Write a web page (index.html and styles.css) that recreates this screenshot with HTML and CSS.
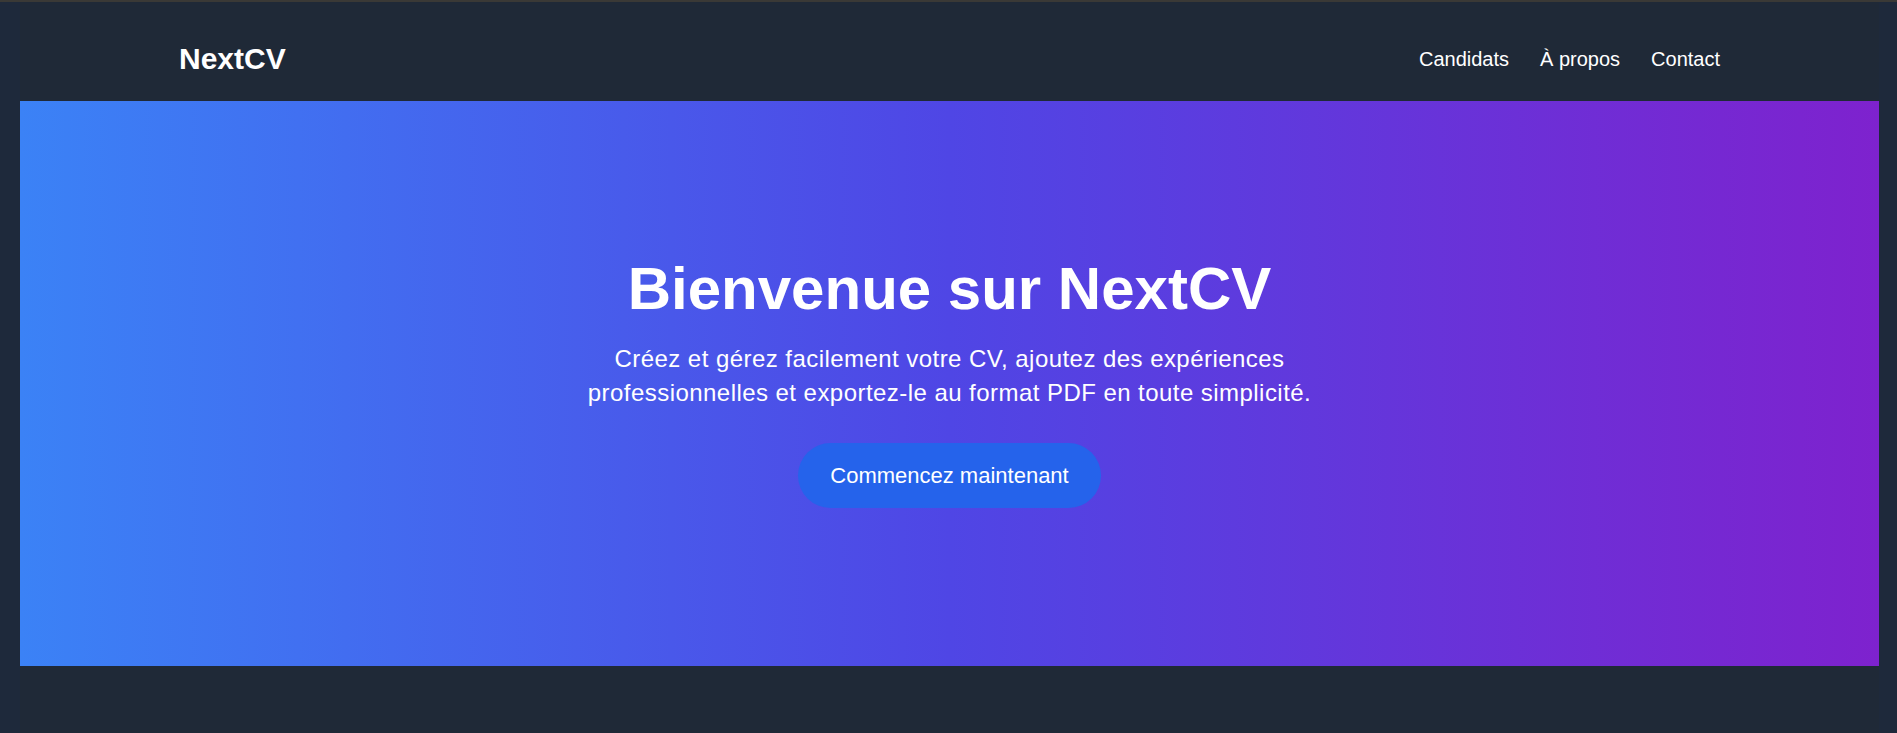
FILE: index.html
```html
<!DOCTYPE html>
<html lang="fr">
<head>
<meta charset="utf-8">
<title>NextCV</title>
<link rel="stylesheet" href="styles.css">
</head>
<body>
<div class="page">
  <header class="site-header">
    <div class="container header-inner">
      <a class="logo" href="#">NextCV</a>
      <nav class="nav">
        <a href="#">Candidats</a>
        <a href="#">À propos</a>
        <a href="#">Contact</a>
      </nav>
    </div>
  </header>
  <section class="hero">
    <h1 class="hero-title">Bienvenue sur NextCV</h1>
    <p class="hero-text">Créez et gérez facilement votre CV, ajoutez des expériences<br>professionnelles et exportez-le au format PDF en toute simplicité.</p>
    <a class="hero-btn" href="#">Commencez maintenant</a>
  </section>
</div>
</body>
</html>
```
FILE: styles.css
```css
* { box-sizing: border-box; }
html, body { margin: 0; height: 100%; }
body {
  background: #1e293b;
  border-top: 2px solid #3a3936;
  padding: 0 18px 0 20px;
  font-family: "Liberation Sans", Arial, sans-serif;
  color: #fff;
}
.page {
  background: #1f2937;
  min-height: 100%;
}
a { color: inherit; text-decoration: none; }
.container {
  max-width: 1541px;
  margin: 0 auto;
}
.site-header {
  padding: 39px 0 24px;
}
.header-inner {
  display: flex;
  justify-content: space-between;
  align-items: center;
}
.logo {
  font-size: 30px;
  line-height: 36px;
  font-weight: 700;
}
.nav {
  display: flex;
  gap: 31px;
  font-size: 20px;
  line-height: 28px;
}
.hero {
  height: 565px;
  background: linear-gradient(to right, #3b82f6, #4f46e5, #7e22ce);
  display: flex;
  flex-direction: column;
  align-items: center;
  justify-content: center;
  text-align: center;
}
.hero-title {
  margin: 0 0 23px;
  font-size: 60px;
  line-height: 60px;
  font-weight: 700;
}
.hero-text {
  margin: 0 0 33px;
  font-size: 24px;
  line-height: 34px;
  letter-spacing: 0.45px;
}
.hero-btn {
  display: inline-block;
  background: #2563eb;
  border-radius: 9999px;
  padding: 18px 32px;
  font-size: 22px;
  line-height: 29px;
}
```
